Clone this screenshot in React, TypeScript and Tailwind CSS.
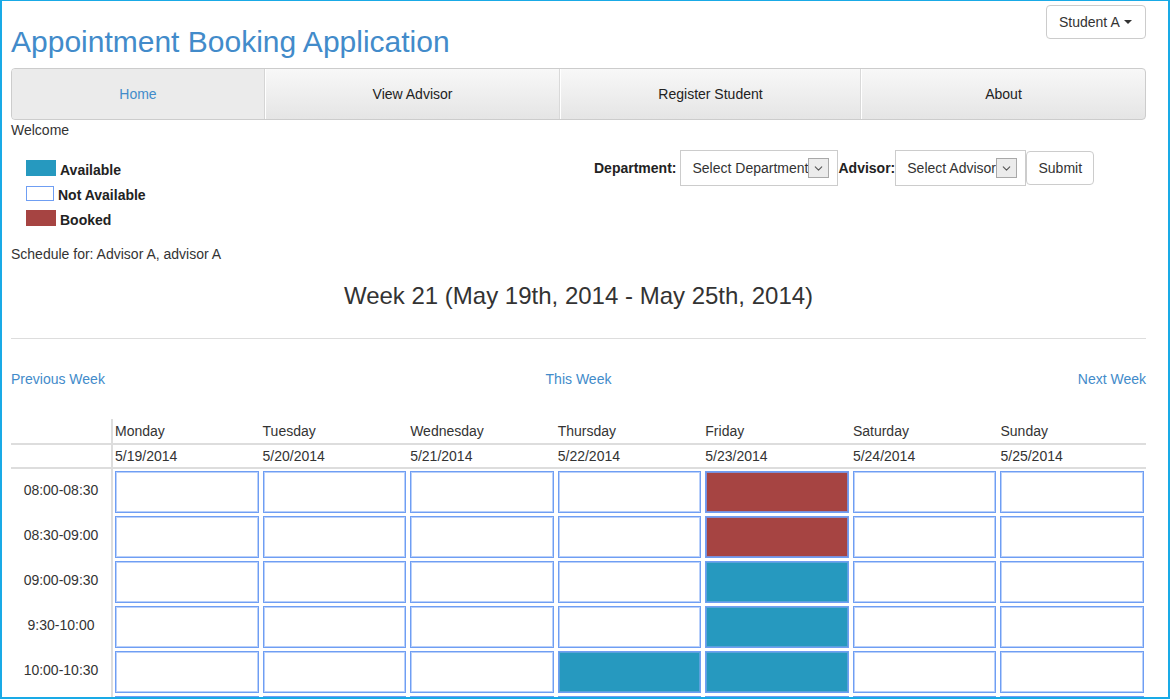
import { ChevronDown } from "lucide-react";

const days = [
  { name: "Monday", date: "5/19/2014" },
  { name: "Tuesday", date: "5/20/2014" },
  { name: "Wednesday", date: "5/21/2014" },
  { name: "Thursday", date: "5/22/2014" },
  { name: "Friday", date: "5/23/2014" },
  { name: "Saturday", date: "5/24/2014" },
  { name: "Sunday", date: "5/25/2014" },
];

// n = not available, a = available, b = booked
const slots: { time: string; cells: string[] }[] = [
  { time: "08:00-08:30", cells: ["n", "n", "n", "n", "b", "n", "n"] },
  { time: "08:30-09:00", cells: ["n", "n", "n", "n", "b", "n", "n"] },
  { time: "09:00-09:30", cells: ["n", "n", "n", "n", "a", "n", "n"] },
  { time: "9:30-10:00", cells: ["n", "n", "n", "n", "a", "n", "n"] },
  { time: "10:00-10:30", cells: ["n", "n", "n", "a", "a", "n", "n"] },
  { time: "", cells: ["n", "n", "n", "a", "a", "n", "n"] },
];

function SlotCell({ kind }: { kind: string }) {
  if (kind === "b") {
    return (
      <div className="h-[42px] bg-[#a64442] border border-[#6f9ef3] shadow-[inset_0_0_0_1px_#7d8fd6]" />
    );
  }
  if (kind === "a") {
    return (
      <div className="h-[42px] bg-[#2699bf] border border-[#6f9ef3] shadow-[inset_0_0_0_1px_#5aa2dc]" />
    );
  }
  return (
    <div className="h-[42px] bg-white border border-[#6f9ef3] shadow-[inset_0_0_0_1px_#b9d0fa]" />
  );
}

function FakeSelect({ label, width }: { label: string; width: string }) {
  return (
    <div
      className={`relative h-[36px] ${width} border border-[#ccc] bg-white overflow-hidden flex items-center pl-[11px] whitespace-nowrap`}
    >
      {label}
      <div className="absolute right-[8px] top-[7px] w-[21px] h-[20px] bg-[#ececec] border border-[#a9a9a9] flex items-center justify-center">
        <ChevronDown size={13} strokeWidth={2} className="text-[#555]" />
      </div>
    </div>
  );
}

export default function App() {
  return (
    <div className="w-[1171px] h-[699px] bg-white">
      <div
        className="w-[1170px] h-[699px] border-t border-l-2 border-r-2 border-b-2 border-[#19aae6] overflow-hidden pl-[9px] pr-[22px] text-[14px] text-[#333]"
        style={{ fontFamily: '"Liberation Sans", Arial, sans-serif' }}
      >
        {/* header */}
        <div className="flex justify-between items-start pt-[4px]">
          <h1 className="mt-[20px] text-[30px] leading-[33px] text-[#428bca]">
            Appointment Booking Application
          </h1>
          <button className="w-[100px] h-[34px] border border-[#ccc] rounded-[4px] bg-white flex items-center pl-[12px] gap-[4px] text-[#333]">
            Student A
            <span className="inline-block w-0 h-0 border-l-[4px] border-r-[4px] border-t-[4px] border-l-transparent border-r-transparent border-t-[#333]" />
          </button>
        </div>

        {/* nav */}
        <div className="mt-[10px] flex h-[52px] border border-[#ccc] rounded-[4px] bg-linear-to-b from-[#f8f8f8] to-[#e5e5e5] overflow-hidden text-[#222]">
          <div className="w-[253px] flex items-center justify-center bg-[#ebebeb] text-[#428bca] border-r border-[#d5d5d5]">
            Home
          </div>
          <div className="w-[295px] flex items-center justify-center border-l border-white border-r border-r-[#d9d9d9]">
            View Advisor
          </div>
          <div className="w-[301px] flex items-center justify-center border-l border-white border-r border-r-[#d9d9d9]">
            Register Student
          </div>
          <div className="flex-1 flex items-center justify-center border-l border-white">
            About
          </div>
        </div>

        <div className="leading-[20px]">Welcome</div>

        {/* legend + form */}
        <div className="mt-[10px] flex items-start">
          <div className="w-[583px] pl-[15px] pt-[8px] font-bold text-[#222]">
            <div className="h-[25px] flex items-start">
              <div className="mt-[2px] w-[30px] h-[16px] bg-[#2699bf]" />
              <span className="ml-[4px] leading-[25px]">Available</span>
            </div>
            <div className="h-[25px] flex items-start">
              <div className="mt-[3px] w-[28px] h-[15px] bg-white border border-[#6f9ef3]" />
              <span className="ml-[4px] leading-[25px]">Not Available</span>
            </div>
            <div className="h-[25px] flex items-start">
              <div className="mt-[2px] w-[30px] h-[16px] bg-[#a64442]" />
              <span className="ml-[4px] leading-[25px]">Booked</span>
            </div>
          </div>
          <div className="flex items-center">
            <span className="font-bold text-[#222] mr-[4px]">Department:</span>
            <FakeSelect label="Select Department" width="w-[158px]" />
            <span className="font-bold text-[#222]">Advisor:</span>
            <FakeSelect label="Select Advisor" width="w-[131px]" />
            <button className="w-[68px] h-[34px] border border-[#ccc] rounded-[4px] bg-white text-[#333]">
              Submit
            </button>
          </div>
        </div>

        <div className="mt-[11px] leading-[20px]">Schedule for: Advisor A, advisor A</div>

        <h3 className="mt-[19px] text-[24px] leading-[26px] text-center">
          Week 21 (May 19th, 2014 - May 25th, 2014)
        </h3>

        <hr className="mt-[29px] border-t border-[#ddd]" />

        <div className="mt-[30px] grid grid-cols-3 leading-[20px] text-[#428bca]">
          <span className="text-left">Previous Week</span>
          <span className="text-center">This Week</span>
          <span className="text-right">Next Week</span>
        </div>

        {/* schedule table */}
        <div className="mt-[30px]">
          <div className="flex border-b-2 border-[#ddd]">
            <div className="w-[102px] h-[24px] border-r-2 border-[#ddd]" />
            {days.map((d) => (
              <div key={d.name} className="flex-1 pl-[2px] leading-[24px]">
                {d.name}
              </div>
            ))}
          </div>
          <div className="flex border-b-2 border-[#ddd]">
            <div className="w-[102px] h-[22px] border-r-2 border-[#ddd]" />
            {days.map((d) => (
              <div key={d.date} className="flex-1 pl-[2px] leading-[22px]">
                {d.date}
              </div>
            ))}
          </div>
          {slots.map((s, r) => (
            <div key={r} className="flex">
              <div className="w-[102px] h-[45px] border-r-2 border-[#ddd] flex items-center justify-center pb-[2px]">
                {s.time}
              </div>
              {s.cells.map((c, i) => (
                <div key={i} className="flex-1 pl-[2px] pr-[2px] pt-[2px] pb-[1px]">
                  <SlotCell kind={c} />
                </div>
              ))}
            </div>
          ))}
        </div>
      </div>
    </div>
  );
}
